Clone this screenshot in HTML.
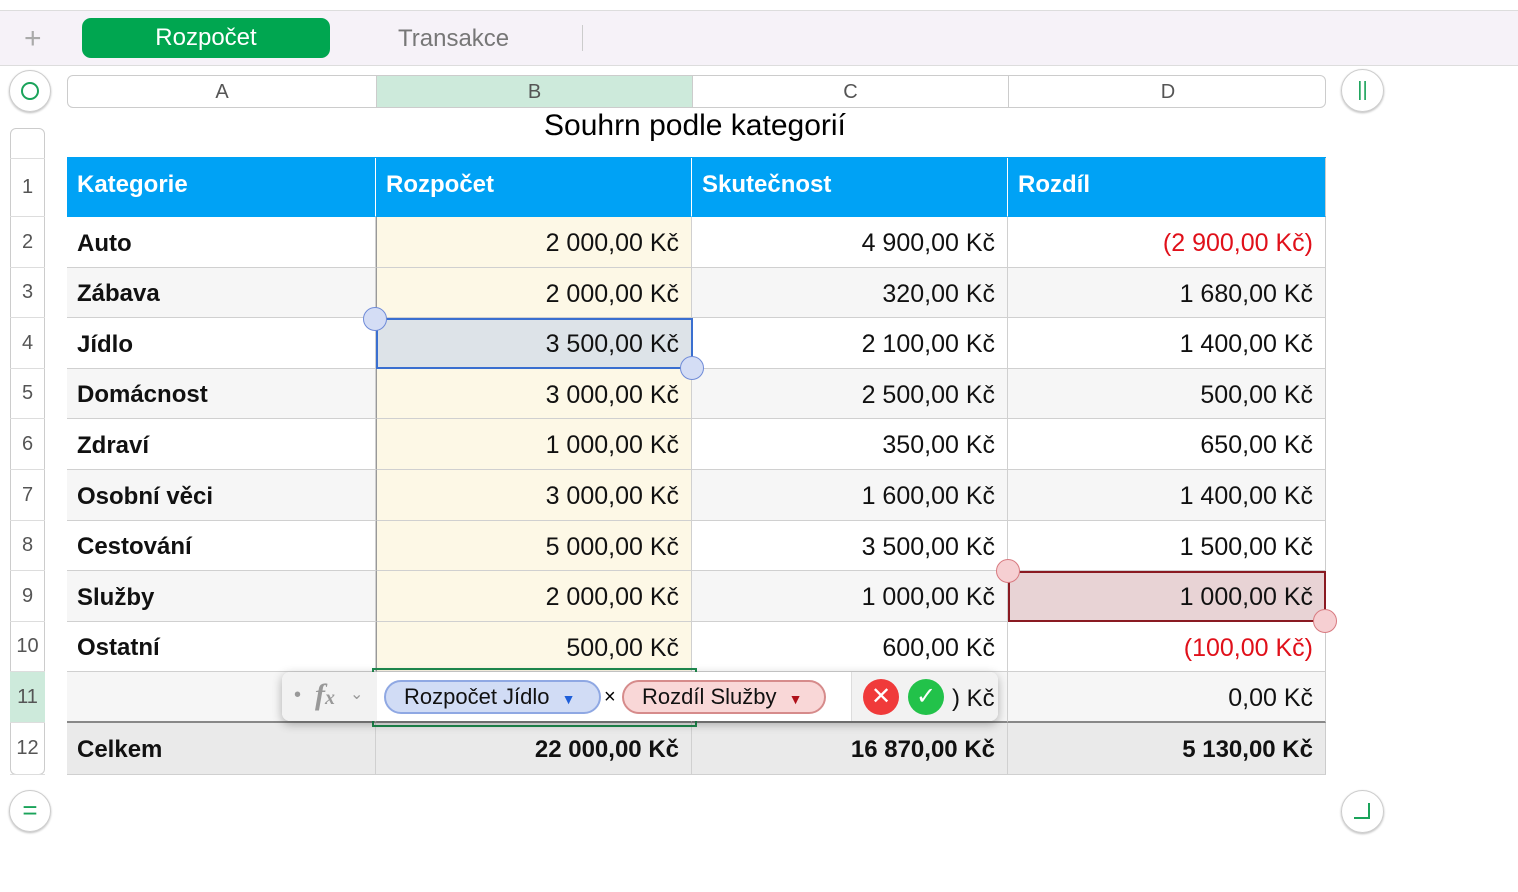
<!DOCTYPE html><html><head><meta charset="utf-8"><style>
*{box-sizing:border-box;margin:0;padding:0}
body{width:1518px;height:892px;background:#fff;font-family:"Liberation Sans",Arial,sans-serif;position:relative;overflow:hidden}
.a{position:absolute}
.c{position:absolute;font-size:25px;color:#111;display:flex;align-items:center;padding:3px 12px 0 10px;border-right:1px solid #d0d0d0;border-bottom:1px solid #d0d0d0;white-space:nowrap}
.r{justify-content:flex-end}
.b{font-weight:bold;font-size:24px}
.rn{position:absolute;left:10px;width:35px;font-size:20px;color:#555;display:flex;align-items:center;justify-content:center;border-bottom:1px solid #ddd}
</style></head><body>
<div class="a" style="left:0;top:10px;width:1518px;height:56px;background:#f6f2f8;border-top:1px solid #ddd;border-bottom:1px solid #ddd"></div>
<div class="a" style="left:24px;top:22px;font-size:30px;color:#aaa;font-weight:300">+</div>
<div class="a" style="left:82px;top:18px;width:248px;height:40px;background:#00a650;border-radius:9px;color:#fff;font-size:24px;display:flex;align-items:center;justify-content:center">Rozpočet</div>
<div class="a" style="left:398px;top:25px;font-size:24px;color:#777">Transakce</div>
<div class="a" style="left:582px;top:25px;width:1px;height:26px;background:#ccc"></div>
<div class="a" style="left:9px;top:70px;width:42px;height:42px;border:1px solid #ccc;border-radius:50%;box-shadow:0 1px 2px #bbb"></div>
<div class="a" style="left:21px;top:82px;width:18px;height:18px;border:2px solid #1aa35a;border-radius:50%"></div>
<div class="a" style="left:67px;top:75px;width:1259px;height:33px;border:1px solid #ccc;border-radius:6px;overflow:hidden;font-size:20px;color:#555">
<div class="a" style="left:0;width:309px;height:33px;text-align:center;line-height:32px;border-right:1px solid #ccc">A</div>
<div class="a" style="left:309px;width:316px;height:33px;text-align:center;line-height:32px;background:#cdeadb;border-right:1px solid #ccc">B</div>
<div class="a" style="left:625px;width:316px;height:33px;text-align:center;line-height:32px;border-right:1px solid #ccc">C</div>
<div class="a" style="left:941px;width:318px;height:33px;text-align:center;line-height:32px">D</div></div>
<div class="a" style="left:1341px;top:69px;width:43px;height:43px;border:1px solid #ccc;border-radius:50%;box-shadow:0 1px 2px #bbb;color:#1aa35a;font-size:20px;text-align:center;line-height:40px">||</div>
<div class="a" style="left:544px;top:109px;font-size:30px;color:#000">Souhrn podle kategorií</div>
<div class="a" style="left:10px;top:128px;width:35px;height:647px;border:1px solid #ccc;border-radius:6px"></div>
<div class="a" style="left:10px;top:672px;width:35px;height:51px;background:#cdeadb"></div>
<div class="a" style="left:67px;top:157px;width:1259px;height:61px;background:#00a2f5"></div>
<div id="t"></div>
<div class="a" style="left:9px;top:790px;width:42px;height:42px;border:1px solid #ccc;border-radius:50%;box-shadow:0 1px 2px #bbb;color:#1aa35a;font-size:26px;text-align:center;line-height:38px">=</div>
<div class="a" style="left:1341px;top:790px;width:43px;height:43px;border:1px solid #ccc;border-radius:50%;box-shadow:0 1px 2px #bbb"></div>
<div class="a" style="left:1354px;top:803px;width:16px;height:16px;border-right:2px solid #1aa35a;border-bottom:2px solid #1aa35a"></div>
<script>
var X=[67,376,692,1008,1326],Y=[158,217,268,318,369,419,470,521,571,622,672,723,775];
var d=[["Kategorie","Rozpočet","Skutečnost","Rozdíl"],["Auto","2 000,00 Kč","4 900,00 Kč","(2 900,00 Kč)"],["Zábava","2 000,00 Kč","320,00 Kč","1 680,00 Kč"],["Jídlo","3 500,00 Kč","2 100,00 Kč","1 400,00 Kč"],["Domácnost","3 000,00 Kč","2 500,00 Kč","500,00 Kč"],["Zdraví","1 000,00 Kč","350,00 Kč","650,00 Kč"],["Osobní věci","3 000,00 Kč","1 600,00 Kč","1 400,00 Kč"],["Cestování","5 000,00 Kč","3 500,00 Kč","1 500,00 Kč"],["Služby","2 000,00 Kč","1 000,00 Kč","1 000,00 Kč"],["Ostatní","500,00 Kč","600,00 Kč","(100,00 Kč)"],["","","0,00 Kč","0,00 Kč"],["Celkem","22 000,00 Kč","16 870,00 Kč","5 130,00 Kč"]];
var h="";
for(var r=0;r<12;r++){h+='<div class="rn" style="top:'+Y[r]+'px;height:'+(Y[r+1]-Y[r])+'px;'+(r==0?'border-top:1px solid #ddd':'')+'">'+(r+1)+'</div>';
for(var c=0;c<4;c++){var bg=r==0?'#00a2f5':r==11?'#eaeaea':c==1?'#fdf8e6':(r%2==0?'#f6f6f6':'#fff');var col=r==0?'#fff':'#111';
if(r==3&&c==1)bg='#dde3e8';if(r==8&&c==3)bg='#e8d3d5';
var t=d[r][c];if(t.charAt(0)=='(')col='#e0101a';
var cls='c'+(c>0&&r>0?' r':'')+(r==0||r==11||c==0?' b':'');
var bd=r==0?'border-right-color:#fff;border-bottom-color:#00a2f5;':'';if(c==1&&r>0&&r<11)bd+='border-left:1px solid #999;';
h+='<div class="'+cls+'" style="left:'+X[c]+'px;top:'+Y[r]+'px;width:'+(X[c+1]-X[c])+'px;height:'+(Y[r+1]-Y[r])+'px;background:'+bg+';color:'+col+';'+bd+(r==0?'align-items:flex-start;padding-top:13px;':'')+(r==10?'border-bottom:2px solid #888;':'')+(c==3?'border-right-color:#ccc;':'')+'">'+t+'</div>';}}
document.getElementById('t').outerHTML=h;
</script>
<div class="a" style="left:376px;top:318px;width:317px;height:51px;border:2px solid #3a6fd0"></div>
<div class="a" style="left:363px;top:307px;width:24px;height:24px;border-radius:50%;background:#d4ddf5;border:1px solid #6f8bd8"></div>
<div class="a" style="left:680px;top:356px;width:24px;height:24px;border-radius:50%;background:#d4ddf5;border:1px solid #6f8bd8"></div>
<div class="a" style="left:1008px;top:571px;width:318px;height:51px;border:2px solid #8a1a22"></div>
<div class="a" style="left:996px;top:559px;width:24px;height:24px;border-radius:50%;background:#f6cfd2;border:1px solid #d87a80"></div>
<div class="a" style="left:1313px;top:609px;width:24px;height:24px;border-radius:50%;background:#f6cfd2;border:1px solid #d87a80"></div>
<div class="a" style="left:372px;top:668px;width:325px;height:59px;border:2px solid #1e8a4e"></div>
<div class="a" style="left:282px;top:672px;width:716px;height:49px;background:#fff;border-radius:8px;box-shadow:0 3px 10px rgba(0,0,0,.3);overflow:hidden">
<div class="a" style="left:0;top:0;width:95px;height:49px;background:#f2f2f2"></div>
<div class="a" style="left:12px;top:12px;color:#999;font-size:20px">•</div>
<div class="a" style="left:33px;top:6px;color:#999;font-size:30px;font-family:'Liberation Serif',serif;font-style:italic;font-weight:bold">f<span style="font-size:20px">x</span></div>
<div class="a" style="left:68px;top:12px;color:#999;font-size:16px">⌄</div>
<div class="a" style="left:102px;top:8px;width:217px;height:34px;border-radius:17px;background:#d1dcf5;border:2px solid #8fa8e3;font-size:22px;color:#111;padding-left:18px;line-height:30px;white-space:nowrap">Rozpočet Jídlo <span style="color:#1d5ed9;font-size:14px;margin-left:6px">▼</span></div>
<div class="a" style="left:322px;top:14px;font-size:20px">×</div>
<div class="a" style="left:340px;top:8px;width:204px;height:34px;border-radius:17px;background:#f9d7d7;border:2px solid #d68b8b;font-size:22px;color:#111;padding-left:18px;line-height:30px;white-space:nowrap">Rozdíl Služby <span style="color:#b0101a;font-size:14px;margin-left:6px">▼</span></div>
<div class="a" style="left:569px;top:0;width:148px;height:49px;background:#f2f2f2;border-left:1px solid #ddd"></div>
<div class="a" style="left:581px;top:7px;width:36px;height:36px;border-radius:50%;background:#f03a3a;color:#fff;font-size:24px;text-align:center;line-height:35px">✕</div>
<div class="a" style="left:626px;top:7px;width:36px;height:36px;border-radius:50%;background:#22c24a;color:#fff;font-size:24px;text-align:center;line-height:35px">✓</div>
<div class="a" style="left:670px;top:13px;font-size:24px;color:#111">) Kč</div>
</div>
</body></html>
